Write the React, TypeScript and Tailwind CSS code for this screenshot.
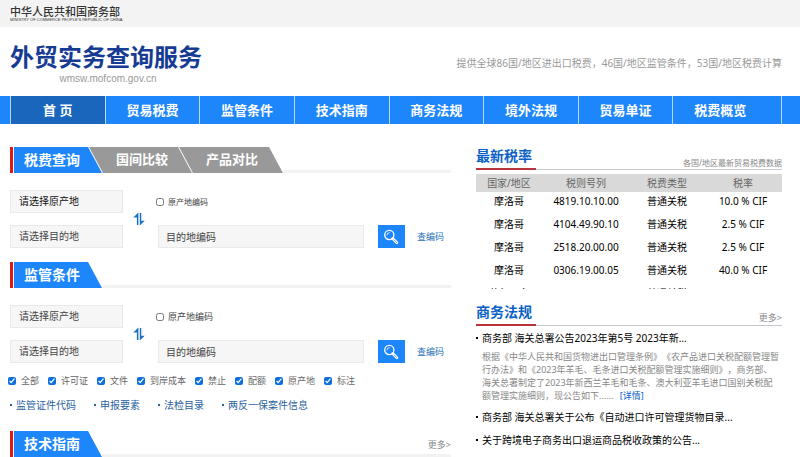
import { useState, type ReactNode } from "react";

const navItems = ["首 页", "贸易税费", "监管条件", "技术指南", "商务法规", "境外法规", "贸易单证", "税费概览"];

const rates = [
  { country: "摩洛哥", code: "4819.10.10.00", type: "普通关税", rate: "10.0 % CIF" },
  { country: "摩洛哥", code: "4104.49.90.10", type: "普通关税", rate: "2.5 % CIF" },
  { country: "摩洛哥", code: "2518.20.00.00", type: "普通关税", rate: "2.5 % CIF" },
  { country: "摩洛哥", code: "0306.19.00.05", type: "普通关税", rate: "40.0 % CIF" },
  { country: "萨尔瓦多", code: "", type: "普通关税", rate: "" },
];

const filters = ["全部", "许可证", "文件", "到岸成本", "禁止", "配额", "原产地", "标注"];

const quickLinks = ["监管证件代码", "申报要素", "法检目录", "两反一保案件信息"];

function SwapIcon() {
  return (
    <svg viewBox="0 0 12 14" className="w-3 h-3.5" fill="#1a6fc0" aria-hidden="true">
      <path d="M5.4 0.4V13H4V5.4H0.3z" />
      <path d="M6.8 13.6V1H8.2V8.8H11.7z" />
      <path d="M3.4 5.6V13H3V5.6zM9.2 1V8.6H8.8V1z" opacity="0.3" />
    </svg>
  );
}

function SearchIcon() {
  return (
    <svg viewBox="0 0 16 16" className="w-4 h-4" fill="none" stroke="#fff" aria-hidden="true">
      <circle cx="6.3" cy="6" r="4.6" strokeWidth="1.3" />
      <path d="M3.9 6a2.4 2.4 0 0 1 2.4-2.4" strokeWidth="0.8" strokeLinecap="round" />
      <path d="M9.7 9.5l4.2 4.2" strokeWidth="2.8" strokeLinecap="round" />
      <path d="M11.2 11l2.6 2.6" stroke="#1e86fb" strokeWidth="0.7" strokeLinecap="round" />
    </svg>
  );
}

function Bullet() {
  return <span className="w-0.5 h-0.5 shrink-0 bg-current" />;
}

function SectionHeader({ children, more }: { children: ReactNode; more?: boolean }) {
  return (
    <div className="flex h-[26px] border-l-[3px] border-[#e01818] pl-px">
      {children}
      <div className="flex-1 flex items-center justify-end border-b-[3px] border-[#f2f2f2]">
        {more && (
          <a href="#more" className="text-[9px] leading-3 text-[#888] pt-1">
            更多&gt;
          </a>
        )}
      </div>
    </div>
  );
}

function SectionTitle({ title }: { title: string }) {
  return (
    <h2 className="w-[88px] pl-2.5 bg-[#1e86fb] text-white text-sm leading-[26px] font-bold whitespace-nowrap [clip-path:polygon(0_0,74px_0,100%_100%,0_100%)]">
      {title}
    </h2>
  );
}

function QueryForm({ id, labelSize, firstColor }: { id: string; labelSize: string; firstColor: string }) {
  const [useCode, setUseCode] = useState(false);

  return (
    <form className="flex mt-[17px]" onSubmit={(e) => e.preventDefault()}>
      <div className="w-[113px] flex flex-col gap-3">
        <select
          aria-label="原产地"
          className={`appearance-none w-full h-[23px] px-2 bg-[#f6f6f6] border border-[#e9e9e9] text-[10px] ${firstColor}`}
        >
          <option>请选择原产地</option>
        </select>
        <select
          aria-label="目的地"
          className="appearance-none w-full h-[23px] px-2 bg-[#f6f6f6] border border-[#e9e9e9] text-[10px] text-[#444]"
        >
          <option>请选择目的地</option>
        </select>
      </div>

      <button type="button" title="互换" className="w-8 flex items-center justify-center">
        <SwapIcon />
      </button>

      <div className="flex-1 flex flex-col gap-3">
        <div className="h-[23px] flex items-center gap-1 pl-px">
          <input
            id={`${id}-origin-code`}
            type="checkbox"
            checked={useCode}
            onChange={(e) => setUseCode(e.target.checked)}
            className="w-2 h-2"
          />
          <label htmlFor={`${id}-origin-code`} className={`${labelSize} text-[#444]`}>
            原产地编码
          </label>
        </div>
        <div className="flex items-center pl-[3px]">
          <input
            type="text"
            aria-label="目的地编码"
            placeholder="目的地编码"
            className="flex-1 min-w-0 h-[23px] px-[7px] bg-[#f6f6f6] border border-[#e9e9e9] text-[10px] placeholder:text-[#444]"
          />
          <button
            type="submit"
            aria-label="查询"
            className="w-[27px] h-[23px] ml-3.5 flex items-center justify-center bg-[#1e86fb]"
          >
            <SearchIcon />
          </button>
          <a href="#codes" className="ml-3 mr-[7px] text-[9px] text-[#1f6fb8]">
            查编码
          </a>
        </div>
      </div>
    </form>
  );
}

function SideTitle({ title, children }: { title: string; children: ReactNode }) {
  return (
    <div className="flex h-6 border-b border-[#c4c8d0]">
      <h2 className="w-[60px] h-6 border-b-2 border-[#b8333a] text-sm leading-5 font-bold text-[#0b62c6] whitespace-nowrap">
        {title}
      </h2>
      <div className="flex-1 flex items-end justify-end text-[#888]">{children}</div>
    </div>
  );
}

export default function App() {
  const [active, setActive] = useState(0);

  return (
    <div className="bg-white text-black font-['Noto_Sans','Noto_Sans_CJK_SC',sans-serif]">
      <header>
        <div className="h-[27px] px-2.5 pt-1.5 bg-[#f3f3f3] text-[#333]">
          <p className="text-[11px] leading-[11px] font-medium">中华人民共和国商务部</p>
          <p className="mt-px text-[4px] leading-[4px] font-['Liberation_Sans',sans-serif]">
            MINISTRY OF COMMERCE PEOPLE'S REPUBLIC OF CHINA
          </p>
        </div>
        <div className="h-[69px] pt-[3px] pl-2.5 pr-[18px] flex items-center justify-between">
          <div className="text-center">
            <h1 className="text-2xl leading-8 font-bold text-[#163b93]">外贸实务查询服务</h1>
            <p className="text-[10px] leading-3 pl-1 text-[#999] font-['Liberation_Sans',sans-serif]">
              wmsw.mofcom.gov.cn
            </p>
          </div>
          <p className="text-[10px] text-[#999]">
            提供全球86国/地区进出口税费，46国/地区监管条件，53国/地区税费计算
          </p>
        </div>
      </header>

      <nav className="bg-[#1e86fb] pl-2.5 pr-[18px]">
        <ul className="flex h-7 border-l border-r border-[#b5d7fd] pr-3.5">
          {navItems.map((item, i) => (
            <li key={item} className={`flex-1 ${i < navItems.length - 1 ? "border-r border-[#b5d7fd]" : ""}`}>
              <a
                href="#nav"
                onClick={() => setActive(i)}
                className={`block text-center text-[13px] leading-7 font-bold text-white ${
                  active === i ? "bg-[#1b66bd]" : ""
                }`}
              >
                {item}
              </a>
            </li>
          ))}
        </ul>
      </nav>

      <main className="flex gap-[25px] pl-2.5 pr-[18px]">
        {/* Query forms */}
        <div className="flex-1 min-w-0 pt-[23px]">
          <SectionHeader>
            <button className="w-[88px] pl-2.5 bg-[#1e86fb] text-white text-sm font-bold text-left [clip-path:polygon(0_0,74px_0,100%_100%,0_100%)]">
              税费查询
            </button>
            <button className="w-[103px] -ml-[13px] pl-[27px] bg-[#999] text-white text-[13px] font-bold text-left [clip-path:polygon(0_0,89px_0,100%_100%,14px_100%)]">
              国间比较
            </button>
            <button className="w-[104px] -ml-[13px] pl-[27px] bg-[#999] text-white text-[13px] font-bold text-left [clip-path:polygon(0_0,90px_0,100%_100%,14px_100%)]">
              产品对比
            </button>
          </SectionHeader>
          <QueryForm id="tax" labelSize="text-[8px]" firstColor="text-[#111]" />

          <div className="mt-3.5">
            <SectionHeader>
              <SectionTitle title="监管条件" />
            </SectionHeader>
          </div>
          <QueryForm id="control" labelSize="text-[9px]" firstColor="text-[#444]" />

          <div className="flex gap-[9px] mt-[11px] -ml-0.5">
            {filters.map((name) => (
              <label key={name} className="flex items-center gap-[5px] text-[9px] leading-[14px] text-[#666]">
                <input type="checkbox" defaultChecked className="w-2 h-2 accent-[#0b6fe0]" />
                {name}
              </label>
            ))}
          </div>

          <ul className="flex gap-[18px] mt-2.5 text-[10px] leading-[14px] text-[#2a5f9e]">
            {quickLinks.map((name) => (
              <li key={name} className="flex items-center gap-1">
                <Bullet />
                <a href="#link">{name}</a>
              </li>
            ))}
          </ul>

          <div className="mt-[19px]">
            <SectionHeader more>
              <SectionTitle title="技术指南" />
            </SectionHeader>
          </div>
        </div>

        {/* Rates and regulations */}
        <div className="w-[306px] pt-[22px]">
          <SideTitle title="最新税率">
            <span className="text-[8px] leading-3">各国/地区最新贸易税费数据</span>
          </SideTitle>

          <div className="mt-1 h-[115px] overflow-hidden">
            <table className="w-full table-fixed text-[10px] leading-[18px] text-center">
              <thead>
                <tr className="bg-[#d9d9d9] text-[#666]">
                  <th className="w-[66px] font-normal">国家/地区</th>
                  <th className="w-[88px] font-normal">税则号列</th>
                  <th className="w-[74px] font-normal">税费类型</th>
                  <th className="font-normal">税率</th>
                </tr>
              </thead>
              <tbody>
                {rates.map((row, i) => (
                  <tr key={i}>
                    <td className="pb-[5px]">{row.country}</td>
                    <td className="pb-[5px]">{row.code}</td>
                    <td className="pb-[5px]">{row.type}</td>
                    <td className="pb-[5px]">{row.rate}</td>
                  </tr>
                ))}
              </tbody>
            </table>
          </div>

          <div className="mt-[13px]">
            <SideTitle title="商务法规">
              <a href="#more" className="text-[9px] leading-[14px]">
                更多&gt;
              </a>
            </SideTitle>
          </div>

          <ul className="mt-[5px] text-[10px] leading-[14px]">
            <li className="flex items-center gap-1">
              <Bullet />
              <a href="#news">商务部 海关总署公告2023年第5号 2023年新...</a>
            </li>
            <li className="mt-[5px] mb-2 pl-1.5 pr-0.5 text-[9px] leading-[13px] text-[#888] [text-spacing-trim:space-all]">
              根据《中华人民共和国货物进出口管理条例》《农产品进口关税配额管理暂行办法》和《2023年羊毛、毛条进口关税配额管理实施细则》，商务部、海关总署制定了2023年新西兰羊毛和毛条、澳大利亚羊毛进口国别关税配额管理实施细则，现公告如下......{" "}
              <a href="#detail" className="ml-1 text-[#0b62c6]">
                [详情]
              </a>
            </li>
            <li className="flex items-center gap-1 mb-[9px]">
              <Bullet />
              <a href="#news">商务部 海关总署关于公布《自动进口许可管理货物目录...</a>
            </li>
            <li className="flex items-center gap-1">
              <Bullet />
              <a href="#news">关于跨境电子商务出口退运商品税收政策的公告...</a>
            </li>
          </ul>
        </div>
      </main>
    </div>
  );
}
